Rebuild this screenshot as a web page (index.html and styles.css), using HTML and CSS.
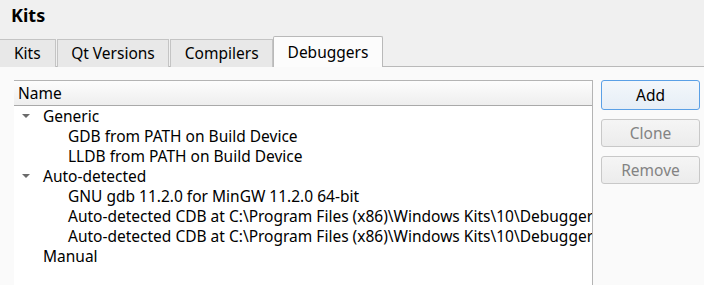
FILE: index.html
```html
<!DOCTYPE html>
<html lang="en">
<head>
<meta charset="UTF-8">
<title>Kits</title>
<link rel="stylesheet" href="styles.css">
</head>
<body>
<div class="page">
  <div class="title">Kits</div>
  <div class="tabbar">
    <div class="tab">Kits</div>
    <div class="tab">Qt Versions</div>
    <div class="tab">Compilers</div>
    <div class="tab active">Debuggers</div>
  </div>
  <div class="pane">
    <div class="tree">
      <div class="tree-header">Name</div>
      <div class="row"><span class="arrow"></span>Generic</div>
      <div class="row child">GDB from PATH on Build Device</div>
      <div class="row child">LLDB from PATH on Build Device</div>
      <div class="row"><span class="arrow"></span>Auto-detected</div>
      <div class="row child">GNU gdb 11.2.0 for MinGW 11.2.0 64-bit</div>
      <div class="row child">Auto-detected CDB at C:\Program Files (x86)\Windows Kits\10\Debuggers\x64\cdb.exe</div>
      <div class="row child">Auto-detected CDB at C:\Program Files (x86)\Windows Kits\10\Debuggers\x86\cdb.exe</div>
      <div class="row">Manual</div>
    </div>
    <div class="buttons">
      <button class="btn default">Add</button>
      <button class="btn" disabled>Clone</button>
      <button class="btn" disabled>Remove</button>
    </div>
  </div>
</div>
</body>
</html>
```
FILE: styles.css
```css
body, html {
  margin: 0;
  padding: 0;
  height: 100vh;
  width: 100vw;
  overflow: hidden;
}
body {
  background: #f0f0f0;
  font-family: "Noto Sans", "Open Sans", sans-serif;
  font-size: 15.5px;
  color: #000;
}
.page {
  display: flex;
  flex-direction: column;
  height: 100%;
}
.title {
  font-weight: bold;
  font-size: 18px;
  height: 36px;
  line-height: 30px;
  padding-left: 11px;
}
.tabbar {
  display: flex;
  align-items: flex-end;
  height: 31px;
  border-bottom: 1px solid #b9b9b9;
  box-sizing: border-box;
}
.tab {
  height: 28px;
  line-height: 27px;
  box-sizing: border-box;
  padding: 0 13.5px;
  border: 1px solid #c4c4c4;
  border-bottom: none;
  background: #e8e8e8;
  margin-right: 1px;
  margin-bottom: -1px;
}
.tab:first-child {
  border-left: none;
  padding: 0 14px;
}
.tab.active {
  height: 31px;
  line-height: 30px;
  background: #fcfcfc;
  border-color: #b9b9b9;
  border-radius: 2px 2px 0 0;
  margin-left: -1px;
}
.pane {
  flex: 1;
  background: #fafafa;
  display: flex;
  padding: 13px 4px 0 14px;
  gap: 8px;
}
.tree {
  flex: 1;
  min-width: 0;
  background: #fff;
  border-top: 1px solid #b4b4b4;
  border-right: 1px solid #b4b4b4;
  overflow: hidden;
  white-space: nowrap;
}
.tree-header {
  height: 24px;
  line-height: 24px;
  padding-left: 4px;
  background: linear-gradient(#fdfdfd, #eeeeee);
  border-bottom: 1px solid #a9a9a9;
}
.row {
  height: 20px;
  line-height: 20px;
  padding-left: 29px;
  position: relative;
}
.row.child {
  padding-left: 54px;
}
.arrow {
  position: absolute;
  left: 8px;
  top: 8px;
  width: 0;
  height: 0;
  border-left: 4px solid transparent;
  border-right: 4px solid transparent;
  border-top: 4px solid #6b6b6b;
}
.buttons {
  width: 99px;
  display: flex;
  flex-direction: column;
  gap: 9px;
}
.btn {
  height: 28px;
  font-family: inherit;
  font-size: 15.5px;
  border: 1px solid #c8c8c8;
  border-radius: 3px;
  background: linear-gradient(#f5f5f5, #ececec);
  color: #000;
  padding: 0;
}
.btn.default {
  height: 30px;
  border-color: #5aa0e6;
  background: linear-gradient(#f3f7fb, #e6eef6);
}
.btn:disabled {
  color: #838383;
}
```
